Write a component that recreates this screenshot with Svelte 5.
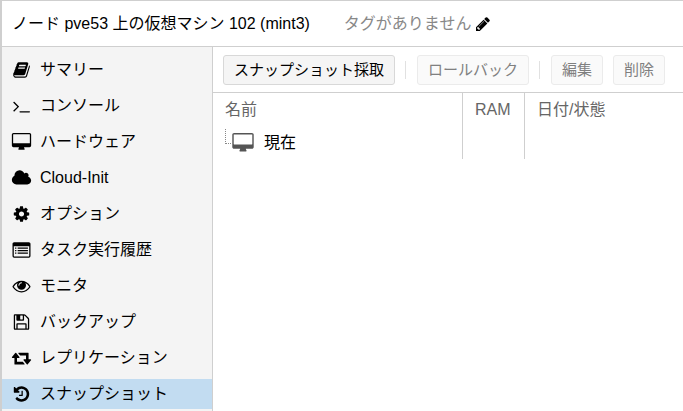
<script>
	const icons = {
		book: {
			box: '0 0 1792 1792',
			path: 'M1703 478q40 57 18 129l-275 906q-19 64-76.5 107.5t-122.5 43.5h-923q-77 0-148.5-53.5t-99.5-131.5q-24-67-2-127 0-4 3-27t4-37q1-8-3-21.5t-3-19.5q2-11 8-21t16.5-23.5 16.5-23.5q23-38 45-91.5t30-91.5q3-10 .5-30t-.5-28q3-11 17-28t17-23q21-36 42-92t25-90q1-9-2.5-32t.5-28q4-13 22-30.5t22-22.5q19-26 42.5-84.5t27.5-96.5q1-8-3-25.5t-2-26.5q2-8 9-18t18-23 17-21q8-12 16.5-30.5t15-35 16-36 19.5-32 26.5-23.5 36-11.5 47.5 5.5l-1 3q38-9 51-9h761q74 0 114 56t18 130l-274 906q-36 119-71.5 153.5t-128.5 34.5h-869q-27 0-38 15-11 16-1 43 24 70 144 70h923q29 0 56-15.5t35-41.5l300-987q7-22 5-57 38 15 59 43zm-1064 2q-4 13 2 22.5t20 9.5h608q13 0 25.5-9.5t16.5-22.5l21-64q4-13-2-22.5t-20-9.5h-608q-13 0-25.5 9.5t-16.5 22.5zm-83 256q-4 13 2 22.5t20 9.5h608q13 0 25.5-9.5t16.5-22.5l21-64q4-13-2-22.5t-20-9.5h-608q-13 0-25.5 9.5t-16.5 22.5z'
		},
		terminal: {
			box: '0 0 1792 1792',
			path: 'M649 983l-466 466q-10 10-23 10t-23-10l-50-50q-10-10-10-23t10-23l393-393-393-393q-10-10-10-23t10-23l50-50q10-10 23-10t23 10l466 466q10 10 10 23t-10 23zm1079 457v64q0 14-9 23t-23 9h-960q-14 0-23-9t-9-23v-64q0-14 9-23t23-9h960q14 0 23 9t9 23z'
		},
		desktop: {
			box: '0 0 2048 1792',
			path: 'M1856 992v-832q0-13-9.5-22.5t-22.5-9.5h-1600q-13 0-22.5 9.5t-9.5 22.5v832q0 13 9.5 22.5t22.5 9.5h1600q13 0 22.5-9.5t9.5-22.5zm128-832v1088q0 66-47 113t-113 47h-544q0 37 16 77.5t32 71 16 43.5q0 26-19 45t-45 19h-512q-26 0-45-19t-19-45q0-14 16-44t32-70 16-78h-544q-66 0-113-47t-47-113v-1088q0-66 47-113t113-47h1600q66 0 113 47t47 113z'
		},
		cloud: {
			box: '0 0 2048 1792',
			path: 'M1984 1152q0 159-112.5 271.5t-271.5 112.5h-1088q-185 0-316.5-131.5t-131.5-316.5q0-132 71-241.5t187-163.5q-2-28-2-43 0-212 150-362t362-150q158 0 286.5 88t187.5 230q70-62 166-62 106 0 181 75t75 181q0 75-41 138 129 30 213 134.5t84 239.5z'
		},
		cog: {
			box: '0 0 1792 1792',
			path: 'M1152 896q0-106-75-181t-181-75-181 75-75 181 75 181 181 75 181-75 75-181zm512-109v222q0 12-8 23t-20 13l-185 28q-19 54-39 91 35 50 107 138 10 12 10 25t-9 23q-27 37-99 108t-94 71q-12 0-26-9l-138-108q-44 23-91 38-16 136-29 186-7 28-36 28h-222q-14 0-24.5-8.5t-11.5-21.5l-28-184q-49-16-90-37l-141 107q-10 9-25 9-14 0-25-11-126-114-165-168-7-10-7-23 0-12 8-23 15-21 51-66.5t54-70.5q-27-50-41-99l-183-27q-13-2-21-12.5t-8-23.5v-222q0-12 8-23t19-13l186-28q14-46 39-92-40-57-107-138-10-12-10-24 0-10 9-23 26-36 98.5-107.5t94.5-71.5q13 0 26 10l138 107q44-23 91-38 16-136 29-186 7-28 36-28h222q14 0 24.5 8.5t11.5 21.5l28 184q49 16 90 37l142-107q9-9 24-9 13 0 25 10 129 119 165 170 7 8 7 22 0 12-8 23-15 21-51 66.5t-54 70.5q26 50 41 98l183 28q13 2 21 12.5t8 23.5z'
		},
		list: {
			box: '0 0 1792 1792',
			path: 'M160 128h1472q66 0 113 47t47 113v1216q0 66-47 113t-113 47H160q-66 0-113-47T0 1504V288q0-66 47-113t113-47zM128 512v992q0 32 32 32h1472q32 0 32-32V512zM256 640h128v128H256zM512 640h1024v128H512zM256 896h128v128H256zM512 896h1024v128H512zM256 1152h128v128H256zM512 1152h1024v128H512z'
		},
		eye: {
			box: '0 0 1792 1792',
			path: 'M1664 960q-152-236-381-353 61 104 61 225 0 185-131.5 316.5t-316.5 131.5-316.5-131.5-131.5-316.5q0-121 61-225-229 117-381 353 133 205 333.5 326.5t434.5 121.5 434.5-121.5 333.5-326.5zm-720-384q0-20-14-34t-34-14q-125 0-214.5 89.5t-89.5 214.5q0 20 14 34t34 14 34-14 14-34q0-86 61-147t147-61q20 0 34-14t14-34zm848 384q0 34-20 69-140 230-376.5 368.5t-499.5 138.5-499.5-139-376.5-368q-20-35-20-69t20-69q140-229 376.5-368t499.5-139 499.5 139 376.5 368q20 35 20 69z'
		},
		floppy: {
			box: '0 0 1792 1792',
			path: 'M512 1536h768v-384h-768v384zm896 0h128v-896q0-14-10-38.5t-20-34.5l-281-281q-10-10-34-20t-39-10v416q0 40-28 68t-68 28h-576q-40 0-68-28t-28-68v-416h-128v1280h128v-416q0-40 28-68t68-28h832q40 0 68 28t28 68v416zm-384-928v-320q0-13-9.5-22.5t-22.5-9.5h-192q-13 0-22.5 9.5t-9.5 22.5v320q0 13 9.5 22.5t22.5 9.5h192q13 0 22.5-9.5t9.5-22.5zm640 32v928q0 40-28 68t-68 28h-1344q-40 0-68-28t-28-68v-1344q0-40 28-68t68-28h928q40 0 88 20t76 48l280 280q28 28 48 76t20 88z'
		},
		retweet: {
			box: '0 0 2048 1792',
			path: 'M1344 1504q0 13-9.5 22.5t-22.5 9.5h-960q-8 0-13.5-2t-9-7-5.5-8-3-11.5-1-11.5v-600h-192q-26 0-45-19t-19-45q0-24 15-41l320-384q19-22 49-22t49 22l320 384q15 17 15 41 0 26-19 45t-45 19h-192v384h576q16 0 25 11l160 192q7 10 7 21zm640-416q0 24-15 41l-320 384q-20 23-49 23t-49-23l-320-384q-15-17-15-41 0-26 19-45t45-19h192v-384h-576q-16 0-25-12l-160-192q-7-9-7-20 0-13 9.5-22.5t22.5-9.5h960q8 0 13.5 2t9 7 5.5 8 3 11.5 1 11.5v600h192q26 0 45 19t19 45z'
		},
		history: {
			box: '0 0 1792 1792',
			path: 'M1664 896q0 156-61 298t-164 245-245 164-298 61q-172 0-327-72.5t-264-204.5q-7-10-6.5-22.5t8.5-20.5l137-138q10-9 25-9 16 2 23 12 73 95 179 147t225 52q104 0 198.5-40.5t163.5-109.5 109.5-163.5 40.5-198.5-40.5-198.5-109.5-163.5-163.5-109.5-198.5-40.5q-98 0-188 35.5t-160 101.5l137 138q31 30 14 69-17 40-59 40h-448q-26 0-45-19t-19-45v-448q0-42 40-59 39-17 69 14l130 129q107-101 244.5-156.5t284.5-55.5q156 0 298 61t245 164 164 245 61 298zm-640-288v448q0 14-9 23t-23 9h-320q-14 0-23-9t-9-23v-64q0-14 9-23t23-9h224v-352q0-14 9-23t23-9h64q14 0 23 9t9 23z'
		},
		pencil: {
			box: '128 128 1536 1536',
			path: 'M491 1536l91-91-235-235-91 91v107h128v128h107zm523-928q0-22-22-22-10 0-17 7l-542 542q-7 7-7 17 0 22 22 22 10 0 17-7l542-542q7-7 7-17zm-54-192l416 416-832 832h-416v-416zm683 96q0 53-37 90l-166 166-416-416 166-165q36-38 90-38 53 0 91 38l235 234q37 39 37 91z'
		}
	};

	const items = [
		{ id: 'summary', text: 'サマリー', icon: 'book' },
		{ id: 'console', text: 'コンソール', icon: 'terminal' },
		{ id: 'hardware', text: 'ハードウェア', icon: 'desktop' },
		{ id: 'cloudinit', text: 'Cloud-Init', icon: 'cloud' },
		{ id: 'options', text: 'オプション', icon: 'cog' },
		{ id: 'tasks', text: 'タスク実行履歴', icon: 'list' },
		{ id: 'monitor', text: 'モニタ', icon: 'eye' },
		{ id: 'backup', text: 'バックアップ', icon: 'floppy' },
		{ id: 'replication', text: 'レプリケーション', icon: 'retweet' },
		{ id: 'snapshot', text: 'スナップショット', icon: 'history' }
	];

	let active = $state('snapshot');
</script>

{#snippet icon(name)}
	<svg class="icon" viewBox={icons[name].box} fill="currentColor" fill-rule="evenodd" aria-hidden="true">
		<path d={icons[name].path} />
	</svg>
{/snippet}

<div class="panel">
	<header class="title">
		<span>ノード pve53 上の仮想マシン 102 (mint3)</span>
		<div class="tags">
			<span>タグがありません</span>
			<button class="edit-tags" aria-label="タグを編集">{@render icon('pencil')}</button>
		</div>
	</header>
	<div class="body">
		<nav class="menu">
			{#each items as item (item.id)}
				<a
					href="#{item.id}"
					class="menu-item"
					class:active={active === item.id}
					onclick={() => (active = item.id)}
				>
					{@render icon(item.icon)}
					<span>{item.text}</span>
				</a>
			{/each}
		</nav>
		<main class="content">
			<div class="toolbar">
				<button class="btn">スナップショット採取</button>
				<span class="separator"></span>
				<button class="btn" disabled>ロールバック</button>
				<span class="separator"></span>
				<button class="btn" disabled>編集</button>
				<button class="btn" disabled>削除</button>
			</div>
			<table class="grid">
				<thead>
					<tr>
						<th class="col-name">名前</th>
						<th class="col-ram">RAM</th>
						<th>日付/状態</th>
					</tr>
				</thead>
				<tbody>
					<tr>
						<td>
							<div class="node">
								<span class="elbow"></span>
								{@render icon('desktop')}
								<span>現在</span>
							</div>
						</td>
						<td></td>
						<td></td>
					</tr>
				</tbody>
			</table>
		</main>
	</div>
</div>

<style>
	:global(body) {
		margin: 0;
		background: #fff;
	}
	.panel {
		display: flex;
		flex-direction: column;
		min-height: 100vh;
		box-sizing: border-box;
		border-top: 1px solid #cfcfcf;
		border-left: 2px solid #cfcfcf;
		font-family: "Liberation Sans", "Noto Sans CJK JP", sans-serif;
		font-size: 16px;
		line-height: 24px;
		color: #000;
		white-space: nowrap;
	}
	.icon {
		display: block;
		flex: none;
		width: 21px;
		height: 18px;
	}
	.title {
		display: flex;
		align-items: center;
		gap: 34px;
		height: 45px;
		padding: 0 10px;
		border-bottom: 1px solid #cfcfcf;
	}
	.tags {
		display: flex;
		align-items: center;
		gap: 4px;
		color: #888;
	}
	.edit-tags {
		padding: 0;
		border: 0;
		background: none;
		color: #000;
		cursor: pointer;
	}
	.edit-tags .icon {
		width: 16px;
		height: 14px;
	}
	.body {
		display: flex;
		flex: 1;
	}
	.menu {
		display: flex;
		flex-direction: column;
		flex: none;
		gap: 6px;
		width: 210px;
		padding-top: 8px;
		border-right: 1px solid #cfcfcf;
		background: #f4f4f4;
	}
	.menu-item {
		display: flex;
		align-items: center;
		gap: 8px;
		height: 30px;
		padding-left: 9px;
		color: #000;
		text-decoration: none;
	}
	.menu-item.active {
		background: #c2dcf1;
	}
	.content {
		flex: 1;
		min-width: 0;
	}
	.toolbar {
		display: flex;
		align-items: center;
		gap: 10px;
		height: 45px;
		padding: 0 10px;
		border-bottom: 1px solid #cfcfcf;
	}
	.btn {
		height: 30px;
		padding: 0 10px;
		border: 1px solid #d8d8d8;
		border-radius: 3px;
		background: #f5f5f5;
		color: #000;
		font: inherit;
		font-size: 15px;
	}
	.btn:disabled {
		border-color: #ebebeb;
		background: #fafafa;
		color: #808080;
	}
	.separator {
		box-sizing: border-box;
		width: 2px;
		height: 18px;
		border-left: 1px solid #e1e1e1;
	}
	.grid {
		width: 100%;
		table-layout: fixed;
		border-collapse: separate;
		border-spacing: 0;
	}
	.grid th,
	.grid td {
		box-sizing: border-box;
		height: 33px;
		padding: 0 12px;
		border-right: 1px solid #cfcfcf;
		text-align: left;
		font-weight: inherit;
	}
	.grid th:last-child,
	.grid td:last-child {
		border-right: 0;
	}
	.grid th {
		color: #666;
	}
	.col-name {
		width: 250px;
	}
	.col-ram {
		width: 62px;
	}
	.node {
		display: flex;
		align-items: center;
	}
	.node .icon {
		width: 24px;
		height: 20px;
		margin-right: 9px;
		color: #555;
	}
	.elbow {
		width: 5px;
		height: 14px;
		margin-bottom: 12px;
		border-left: 1px dotted #888;
		border-bottom: 1px dotted #888;
	}
</style>
